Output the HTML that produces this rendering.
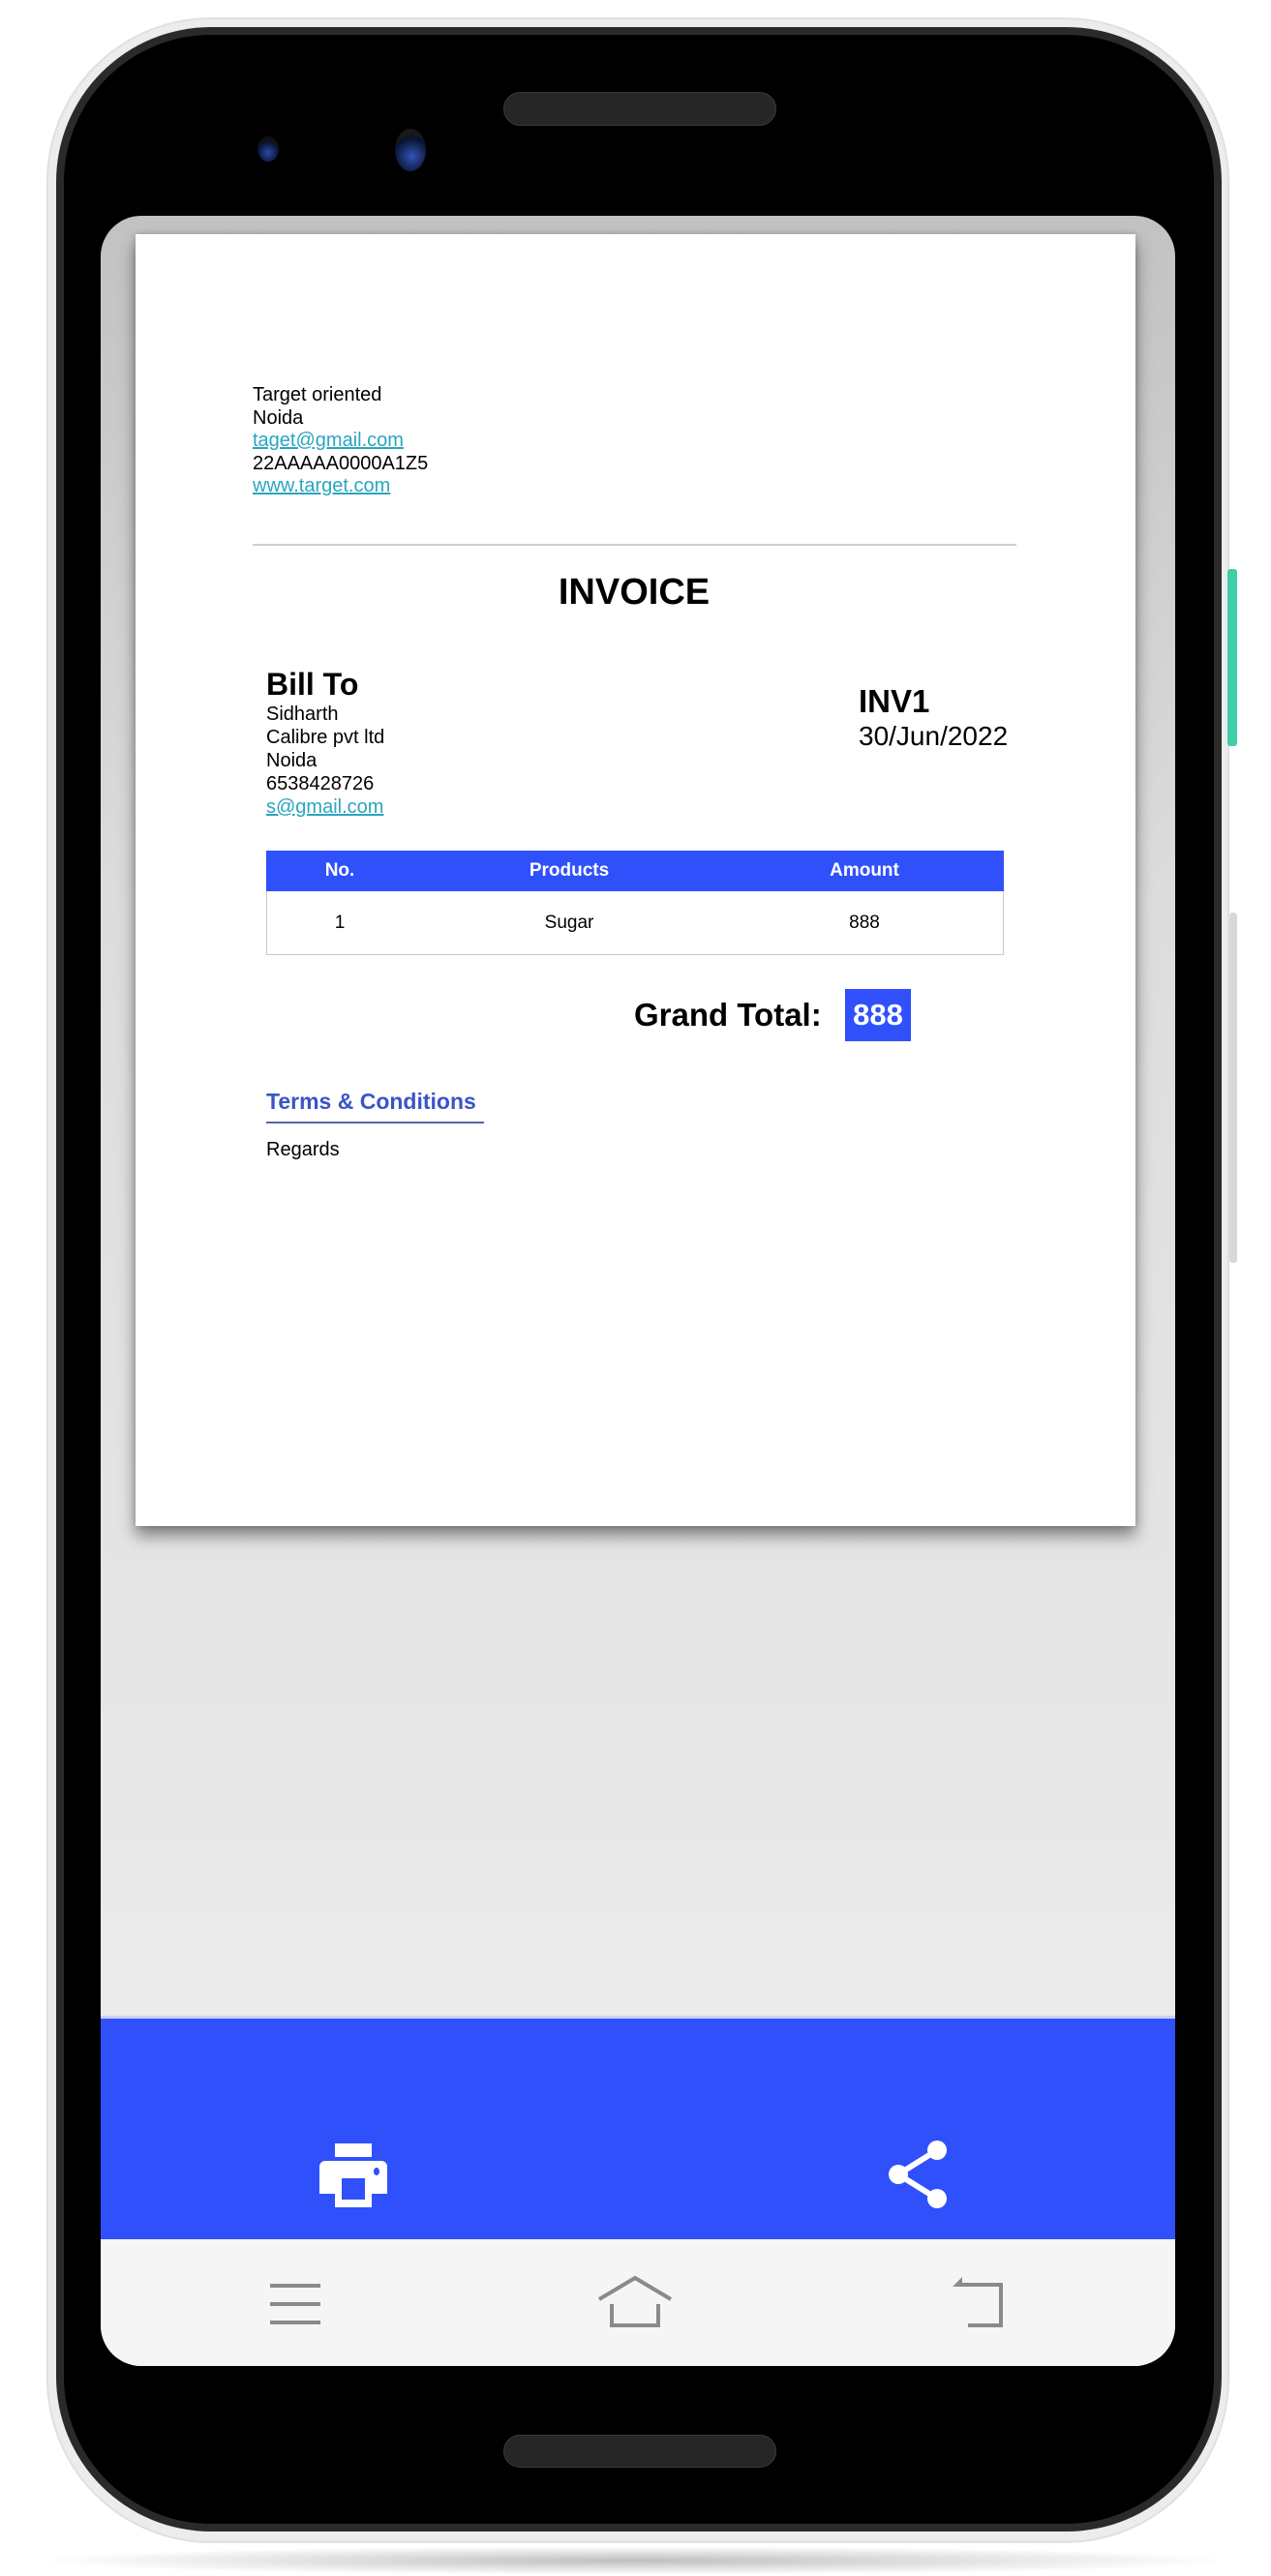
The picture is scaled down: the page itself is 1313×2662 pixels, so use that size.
<!DOCTYPE html>
<html><head><meta charset="utf-8">
<style>
*{margin:0;padding:0;box-sizing:border-box}
body{width:1313px;height:2662px;background:#fff;position:relative;overflow:hidden;font-family:"Liberation Sans",Arial,sans-serif}
.a{position:absolute}
.t{position:absolute;white-space:nowrap;color:#000;font-family:"Liberation Sans",Arial,sans-serif}
a{color:#2aa5c0;text-decoration:underline}
</style></head><body>
<!-- phone body -->
<div class="a" style="left:30px;top:2631px;width:1250px;height:30px;border-radius:50%;background:radial-gradient(ellipse at center,rgba(0,0,0,0.25),rgba(0,0,0,0) 70%)"></div>
<div class="a" style="left:48px;top:18px;width:1222px;height:2610px;border-radius:170px;background:#ececec;border:2px solid #e0e0e0"></div>
<div class="a" style="left:58px;top:28px;width:1204px;height:2588px;border-radius:160px;background:#2a2a2a"></div>
<div class="a" style="left:66px;top:36px;width:1188px;height:2572px;border-radius:152px;background:#000"></div>
<!-- side buttons -->
<div class="a" style="left:1268px;top:588px;width:10px;height:183px;border-radius:3px;background:#3fcfa8"></div>
<div class="a" style="left:1270px;top:943px;width:8px;height:362px;border-radius:3px;background:#d8d8d8"></div>
<!-- speakers & cameras -->
<div class="a" style="left:520px;top:95px;width:282px;height:35px;border-radius:18px;background:#262626;border:1px solid #3a3a3a"></div>
<div class="a" style="left:520px;top:2516px;width:282px;height:34px;border-radius:17px;background:#262626;border:1px solid #3a3a3a"></div>
<div class="a" style="left:266px;top:141px;width:22px;height:26px;border-radius:50%;background:radial-gradient(circle at 50% 65%,#2b4aa8 0,#0a1230 55%,#111 70%)"></div>
<div class="a" style="left:408px;top:133px;width:32px;height:44px;border-radius:50%;background:radial-gradient(circle at 55% 65%,#2f55b8 0,#0a1230 55%,#1a1a1a 72%)"></div>
<!-- screen -->
<div class="a" style="left:104px;top:223px;width:1110px;height:2222px;border-radius:42px;overflow:hidden;background:linear-gradient(#c2c2c2 0,#dcdcdc 700px,#e6e6e6 1500px,#ebebeb 1860px)">
  <!-- paper -->
  <div class="a" style="left:36px;top:19px;width:1033px;height:1335px;background:#fff;box-shadow:0 10px 16px rgba(0,0,0,0.45),0 0 6px rgba(0,0,0,0.2)"></div>
  <!-- blue bar -->
  <div class="a" style="left:0;top:1860px;width:1110px;height:231px;background:#3050fc;border-top:3px solid #c9d2f4"></div>
  <!-- print icon -->
  <svg class="a" style="left:226px;top:1992px" width="70" height="66" viewBox="0 0 70 66">
    <rect x="16" y="0" width="38" height="14" fill="#fff"/>
    <path d="M6 18h58a6 6 0 0 1 6 6v28h-16v14H16V52H0V24a6 6 0 0 1 6-6z" fill="#fff"/>
    <rect x="23" y="36" width="24" height="22" fill="#3050fc"/>
    <ellipse cx="59" cy="29" rx="3" ry="4" fill="#3050fc"/>
  </svg>
  <!-- share icon -->
  <svg class="a" style="left:812px;top:1988px" width="64" height="72" viewBox="0 0 64 72">
    <path d="M52 11L12 36L52 61" stroke="#fff" stroke-width="6" fill="none"/>
    <circle cx="52" cy="11" r="10" fill="#fff"/><circle cx="12" cy="36" r="10" fill="#fff"/><circle cx="52" cy="61" r="10" fill="#fff"/>
  </svg>
  <!-- nav bar -->
  <div class="a" style="left:0;top:2091px;width:1110px;height:131px;background:#f5f5f5"></div>
  <svg class="a" style="left:170px;top:2135px" width="60" height="50"><g stroke="#8a8a8a" stroke-width="4"><line x1="5" y1="4" x2="57" y2="4"/><line x1="5" y1="23" x2="57" y2="23"/><line x1="5" y1="42" x2="57" y2="42"/></g></svg>
  <svg class="a" style="left:512px;top:2128px" width="80" height="58"><path d="M3 25L40 3L77 25" stroke="#8a8a8a" stroke-width="4" fill="none"/><path d="M16 30V52H64V30" stroke="#8a8a8a" stroke-width="4" fill="none"/></svg>
  <svg class="a" style="left:876px;top:2128px" width="60" height="58"><path d="M12 10H54V52H20" stroke="#8a8a8a" stroke-width="4" fill="none"/><path d="M14 2L4 12L14 12Z" fill="#8a8a8a"/></svg>
</div>
<!-- paper text (page coords) -->
<div class="t" style="left:261px;top:397px;font-size:20px;line-height:23.5px">Target oriented<br>Noida<br><a>taget@gmail.com</a><br>22AAAAA0000A1Z5<br><a>www.target.com</a></div>
<div class="a" style="left:261px;top:562px;width:789px;height:2px;background:#cfcfcf"></div>
<div class="t" style="left:0;width:1310px;text-align:center;top:591px;font-size:38px;font-weight:bold">INVOICE</div>
<div class="t" style="left:275px;top:689px;font-size:32px;font-weight:bold">Bill To</div>
<div class="t" style="left:275px;top:726px;font-size:20px;line-height:24px">Sidharth<br>Calibre pvt ltd<br>Noida<br>6538428726<br><a>s@gmail.com</a></div>
<div class="t" style="left:887px;top:706px;font-size:33px;font-weight:bold">INV1</div>
<div class="t" style="left:887px;top:745px;font-size:28px">30/Jun/2022</div>
<!-- table -->
<div class="a" style="left:275px;top:879px;width:762px;height:108px;border:1.5px solid #c8c8c8"></div>
<div class="a" style="left:275px;top:879px;width:762px;height:42px;background:#3050fc"></div>
<div class="t" style="left:301px;width:100px;text-align:center;top:889px;font-size:19px;font-weight:bold;color:#fff">No.</div>
<div class="t" style="left:488px;width:200px;text-align:center;top:889px;font-size:19px;font-weight:bold;color:#fff">Products</div>
<div class="t" style="left:793px;width:200px;text-align:center;top:889px;font-size:19px;font-weight:bold;color:#fff">Amount</div>
<div class="t" style="left:301px;width:100px;text-align:center;top:943px;font-size:19px">1</div>
<div class="t" style="left:488px;width:200px;text-align:center;top:943px;font-size:19px">Sugar</div>
<div class="t" style="left:793px;width:200px;text-align:center;top:943px;font-size:19px">888</div>
<!-- grand total -->
<div class="t" style="left:655px;top:1030px;font-size:33px;font-weight:bold">Grand Total:</div>
<div class="a" style="left:873px;top:1022px;width:68px;height:54px;background:#3050fc"></div>
<div class="t" style="left:873px;width:68px;text-align:center;top:1031px;font-size:31px;font-weight:bold;color:#fff">888</div>
<!-- terms -->
<div class="t" style="left:275px;top:1125px;font-size:23px;font-weight:bold;color:#3a55c8">Terms &amp; Conditions</div>
<div class="a" style="left:275px;top:1159px;width:225px;height:2px;background:#5566a8"></div>
<div class="t" style="left:275px;top:1177px;font-size:20px">Regards</div>
</body></html>
